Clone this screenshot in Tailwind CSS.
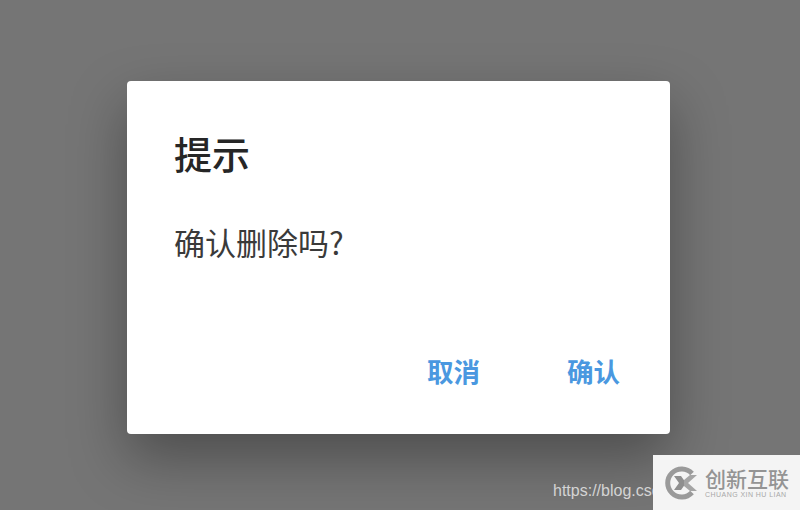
<!DOCTYPE html>
<html lang="zh-CN">
<head>
  <meta charset="UTF-8" />
  <title>提示</title>
  <script src="https://cdn.jsdelivr.net/npm/@tailwindcss/browser@4"></script>
</head>
<body class="bg-[#757575] font-['Noto_Sans_CJK_SC',sans-serif] overflow-hidden">
  <div class="relative w-[800px] h-[510px] pl-[127px] pt-[81px] overflow-hidden">

    <!-- Dialog -->
    <div class="w-[543px] h-[353px] bg-white rounded-[4px] flex flex-col shadow-[0_24px_56px_rgba(0,0,0,0.34)]">
      <h1 class="mt-[47px] ml-[47px] text-[38px] leading-[50px] font-medium text-[#262626]">提示</h1>
      <p class="mt-[41px] ml-[47px] text-[31px] leading-[46px] text-[#3a3a3a]">确认删除吗?</p>
      <div class="mt-auto mb-[45px] flex justify-end gap-[87px] pr-[50px]">
        <button class="text-[26.5px] leading-[36px] font-semibold text-[#4a98e0]">取消</button>
        <button class="text-[26.5px] leading-[36px] font-semibold text-[#4a98e0]">确认</button>
      </div>
    </div>

    <!-- Watermark -->
    <span class="absolute left-[553px] top-[481px] font-['Liberation_Sans',sans-serif] text-[16px] leading-[19px] text-[#d4d4d4]">https://blog.csdn.net</span>
    <div class="absolute left-[653px] top-[455px] w-[147px] h-[55px] bg-[#f4f4f4] flex items-center pl-[12px] gap-[6px]">
      <svg width="34" height="34" viewBox="0 0 34 34" fill="none">
        <path d="M27 7.5A14 14 0 1 0 27 26.5" stroke="#9a9a9a" stroke-width="5"/>
        <path d="M9 10h7l5 7-5 7H9l5-7z" fill="#8f8f8f"/>
        <path d="M19 14l6-5h7l-9 8 9 8h-7l-6-5z" fill="#a5a5a5"/>
      </svg>
      <div class="flex flex-col">
        <span class="text-[21px] leading-[22px] font-medium text-[#949494] whitespace-nowrap">创新互联</span>
        <span class="mt-[2px] font-['Liberation_Sans',sans-serif] text-[7px] leading-[8px] tracking-[0.45px] text-[#a8a8a8] whitespace-nowrap">CHUANG XIN HU LIAN</span>
      </div>
    </div>
  </div>
</body>
</html>
